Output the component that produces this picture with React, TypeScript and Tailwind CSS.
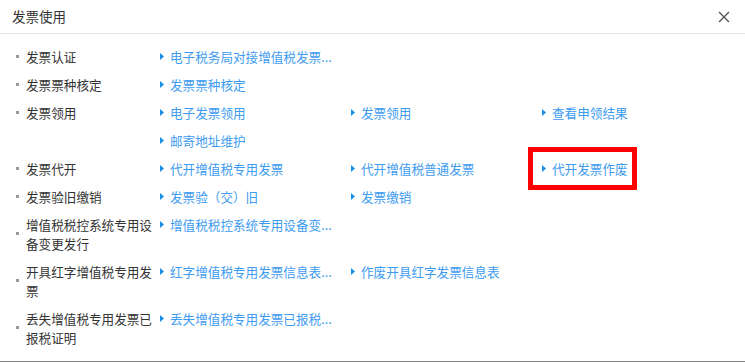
import React from "react";

type Row = { label: string; links: string[] };

const rows: Row[] = [
  { label: "发票认证", links: ["电子税务局对接增值税发票..."] },
  { label: "发票票种核定", links: ["发票票种核定"] },
  { label: "发票领用", links: ["电子发票领用", "发票领用", "查看申领结果", "邮寄地址维护"] },
  { label: "发票代开", links: ["代开增值税专用发票", "代开增值税普通发票", "代开发票作废"] },
  { label: "发票验旧缴销", links: ["发票验（交）旧", "发票缴销"] },
  { label: "增值税税控系统专用设备变更发行", links: ["增值税税控系统专用设备变..."] },
  { label: "开具红字增值税专用发票", links: ["红字增值税专用发票信息表...", "作废开具红字发票信息表"] },
  { label: "丢失增值税专用发票已报税证明", links: ["丢失增值税专用发票已报税..."] },
];

function Arrow() {
  return (
    <svg width="4" height="7" viewBox="0 0 4 7" className="shrink-0">
      <polygon points="0,0 4,3.5 0,7" fill="#1a8ee6" />
    </svg>
  );
}

export default function App() {
  return (
    <div
      className="relative w-[745px] h-[362px] bg-white overflow-hidden border-b border-[#8a8a8a]"
      style={{ fontFamily: '"Noto Sans CJK SC", "Noto Sans", sans-serif' }}
    >
      <div className="flex items-center justify-between h-[34px] border-b border-[#e6e6e6] pl-[12px] pr-[15px]">
        <span className="text-[13.5px] text-[#333] leading-none">发票使用</span>
        <svg width="12" height="12" viewBox="0 0 12 12">
          <path d="M1 1 L11 11 M11 1 L1 11" stroke="#555" strokeWidth="1.4" fill="none" />
        </svg>
      </div>
      <div className="pt-[8px] pl-[16px]">
        {rows.map((r) => (
          <div key={r.label} className="flex items-start">
            <div className="w-[144px] flex items-center gap-[7px] py-[4.5px]">
              <span className="w-[3px] h-[3px] bg-[#999] shrink-0" />
              <span className="w-[128px] text-[12.6px] leading-[19px] text-[#333]">{r.label}</span>
            </div>
            <div className="grid grid-cols-3 w-[573px] content-start">
              {r.links.map((l) => (
                <div key={l} className="flex items-center gap-[6px] h-[28px] whitespace-nowrap">
                  <Arrow />
                  <span className="text-[12.6px] leading-[19px] text-[#3d9bf0]">{l}</span>
                </div>
              ))}
            </div>
          </div>
        ))}
      </div>
      <div className="absolute left-[528px] top-[147px] w-[109px] h-[43px] border-[5px] border-[#ff0000]" />
    </div>
  );
}
